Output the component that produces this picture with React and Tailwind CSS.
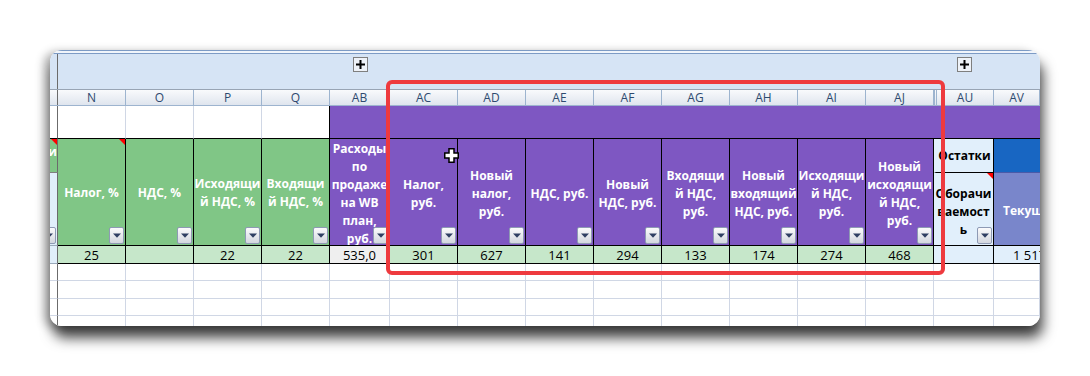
import React from 'react';

// --- DONNÉES DU TABLEAU ---
const letters = ['', 'N', 'O', 'P', 'Q', 'AB', 'AC', 'AD', 'AE', 'AF', 'AG', 'AH', 'AI', 'AJ', 'AU', 'AV'];

const greenHeaders = [['Налог, %'], ['НДС, %'], ['Исходящи', 'й НДС, %'], ['Входящи', 'й НДС, %']];

const purpleHeaders = [
    ['Расходы', 'по', 'продаже', 'на WB', 'план,', 'руб.'],
    ['Налог,', 'руб.'],
    ['Новый', 'налог,', 'руб.'],
    ['НДС, руб.'],
    ['Новый', 'НДС, руб.'],
    ['Входящи', 'й НДС,', 'руб.'],
    ['Новый', 'входящий', 'НДС, руб.'],
    ['Исходящи', 'й НДС,', 'руб.'],
    ['Новый', 'исходящи', 'й НДС,', 'руб.'],
];

const greenValues = ['25', '', '22', '22'];
const purpleValues = ['301', '627', '141', '294', '133', '174', '274', '468'];

const GRID =
    'grid grid-cols-[8px_68px_68px_68px_68px_60px_68px_68px_68px_68px_68px_68px_68px_68px_60px_46px]';

// -- PETITS ÉLÉMENTS --
const FilterButton = () => (
    <span className="absolute bottom-px right-px flex h-[17px] w-[15px] items-center justify-center rounded-[2px] border border-[#8e9ab4] bg-gradient-to-b from-[#fbfbfc] to-[#d3d7df]">
        <svg width="8" height="5" viewBox="0 0 8 5">
            <path d="M0 0.5h8L4 4.8z" fill="#2f3f63" />
        </svg>
    </span>
);

const Note = () => (
    <span className="absolute right-0 top-0 h-0 w-0 border-l-[6px] border-t-[6px] border-l-transparent border-t-[#ff0000]" />
);

const PlusBox = () => (
    <span className="mt-[3px] flex h-[15px] w-[15px] items-center justify-center border border-[#7f7f7f] bg-[#eef2f8]">
        <svg width="9" height="9" viewBox="0 0 9 9">
            <path d="M3.5 0h2v3.5H9v2H5.5V9h-2V5.5H0v-2h3.5z" fill="#000" />
        </svg>
    </span>
);

const Lines = ({ lines }) => lines.map((l, i) => <span key={i} className="whitespace-nowrap">{l}</span>);

// --- COMPOSANT PRINCIPAL ---
const App = () => {
    return (
        <div className="relative h-[376px] w-[1090px] overflow-hidden bg-white pl-[50px] pt-[50px] font-['Open_Sans',sans-serif]">
            <div className="h-[276px] w-[990px] overflow-hidden rounded-[12px] bg-white shadow-[3px_12px_13px_rgba(0,0,0,0.72),-6px_2px_10px_rgba(0,0,0,0.3)]">
                {/* -- barre de groupement -- */}
                <div className="h-[4px] border-y border-[#7d9bc5] bg-[#f1f5fb]" />
                <div className={`${GRID} h-[35px] bg-[#d6e4f5]`}>
                    <div className="border-r border-[#6b6b6b]" />
                    <div className="col-span-4" />
                    <div className="flex justify-center">
                        <PlusBox />
                    </div>
                    <div className="col-span-8" />
                    <div className="flex justify-center">
                        <PlusBox />
                    </div>
                    <div />
                </div>

                {/* -- en-têtes de colonnes -- */}
                <div className={`${GRID} h-[17px] border-y border-t-[#98a4b4] border-b-[#9db4cf] text-[12px] leading-[15px] text-[#2e4a6f]`}>
                    {letters.map((l, i) => (
                        <div
                            key={i}
                            className={`flex items-center justify-center bg-gradient-to-b from-[#f9fafc] to-[#dfe5ee] ${
                                i === 0 ? 'border-r border-[#6b6b6b]' : 'border-r border-[#9db4cf]'
                            } ${i === 14 ? 'border-l-[3px] border-double border-l-[#9db4cf]' : ''}`}
                        >
                            {l}
                        </div>
                    ))}
                </div>

                {/* -- corps -- */}
                <div className={`${GRID} grid-rows-[33px_34px_73px_18px_17px_18px_17px_17px] text-[13px]`}>
                    {/* ligne 1 */}
                    <div className="border-b border-r border-b-black border-r-[#6b6b6b] bg-white" />
                    {[0, 1, 2, 3].map((i) => (
                        <div
                            key={i}
                            className={`border-b border-r border-b-black bg-white ${i === 3 ? 'border-r-black' : 'border-r-[#d0d7e5]'}`}
                        />
                    ))}
                    <div className="col-span-11 border-b border-black bg-[#7e57c2]" />

                    {/* lignes 2-3 : titres */}
                    <div className="relative flex justify-end border-b border-r border-b-[#7f7f7f] border-r-[#6b6b6b] bg-[#80c686] pt-[5px] text-[12px] font-bold leading-[16px] text-white">
                        <span className="whitespace-nowrap">и</span>
                        <Note />
                    </div>
                    {greenHeaders.map((h, i) => (
                        <div
                            key={i}
                            className="relative row-span-2 flex flex-col items-center justify-center overflow-hidden border-b border-r border-black bg-[#80c686] pt-px text-[12px] font-bold leading-[18px] text-white"
                        >
                            <Lines lines={h} />
                            {i === 0 && <Note />}
                            <FilterButton />
                        </div>
                    ))}
                    {purpleHeaders.map((h, i) => (
                        <div
                            key={i}
                            className="relative row-span-2 flex flex-col items-center justify-center overflow-hidden border-b border-r border-black bg-[#7e57c2] pt-[3px] text-[12px] font-bold leading-[18px] text-white"
                        >
                            <Lines lines={h} />
                            <FilterButton />
                        </div>
                    ))}
                    <div className="flex items-center justify-center border-b border-r border-l-[2px] border-black border-l-[#e1effb] bg-[#e1effb] text-[12px] font-bold text-black">
                        Остатки
                    </div>
                    <div className="border-b border-b-[#4a5aa8] bg-[#1866c2]" />
                    <div className="relative overflow-hidden border-b border-r border-b-[#9aa9ba] border-r-[#6b6b6b] bg-[#e1effb]">
                        <FilterButton />
                    </div>
                    <div className="relative flex flex-col items-center justify-center overflow-hidden border-b border-r border-black bg-[#e1effb] pt-[6px] text-[12px] font-bold leading-[18px] text-black">
                        <Lines lines={['Оборачи', 'ваемост', 'ь']} />
                        <Note />
                        <FilterButton />
                    </div>
                    <div className="flex items-center overflow-hidden border-b border-black bg-[#7986cb] pl-[9px] pt-[3px] text-[12px] font-bold text-white">
                        <span className="whitespace-nowrap">Текущий</span>
                    </div>

                    {/* ligne 4 : valeurs */}
                    <div className="border-b border-r border-b-[#9aa9ba] border-r-[#6b6b6b] bg-[#e1effb]" />
                    {greenValues.map((v, i) => (
                        <div key={i} className="flex items-center justify-center border-b border-r border-black bg-[#c6e7ca] leading-[16px] text-black">
                            {v}
                        </div>
                    ))}
                    <div className="flex items-center justify-center border-b border-r border-black bg-[#efefef] leading-[16px] text-black">
                        535,0
                    </div>
                    {purpleValues.map((v, i) => (
                        <div key={i} className="flex items-center justify-center border-b border-r border-black bg-[#c6e7ca] leading-[16px] text-black">
                            {v}
                        </div>
                    ))}
                    <div className="border-b border-r border-black bg-[#e1effb]" />
                    <div className="flex items-center overflow-hidden border-b border-black bg-[#e1effb] pl-[19px] leading-[16px] text-black">
                        <span className="whitespace-nowrap">1 517</span>
                    </div>

                    {/* lignes vides */}
                    {[0, 1, 2, 3].map((r) =>
                        letters.map((_, c) => (
                            <div
                                key={`${r}-${c}`}
                                className={`border-b border-r border-b-[#d0d7e5] bg-white ${
                                    c === 0 ? 'border-r-[#6b6b6b]' : 'border-r-[#d0d7e5]'
                                }`}
                            />
                        ))
                    )}
                </div>
            </div>

            {/* -- cadre rouge de mise en évidence -- */}
            <div className="pointer-events-none absolute left-[386px] top-[80px] h-[195px] w-[559px] rounded-[6px] border-[4px] border-[#ee3a3e]" />

            {/* -- curseur de la souris -- */}
            <svg className="absolute left-[444px] top-[148px]" width="16" height="16" viewBox="0 0 16 16">
                <path
                    d="M5 0.75h5v4.25h4.25v5H10v4.25H5V10H0.75V5H5z"
                    fill="#fff"
                    stroke="#000"
                    strokeWidth="1.5"
                />
            </svg>
        </div>
    );
};

export default App;
